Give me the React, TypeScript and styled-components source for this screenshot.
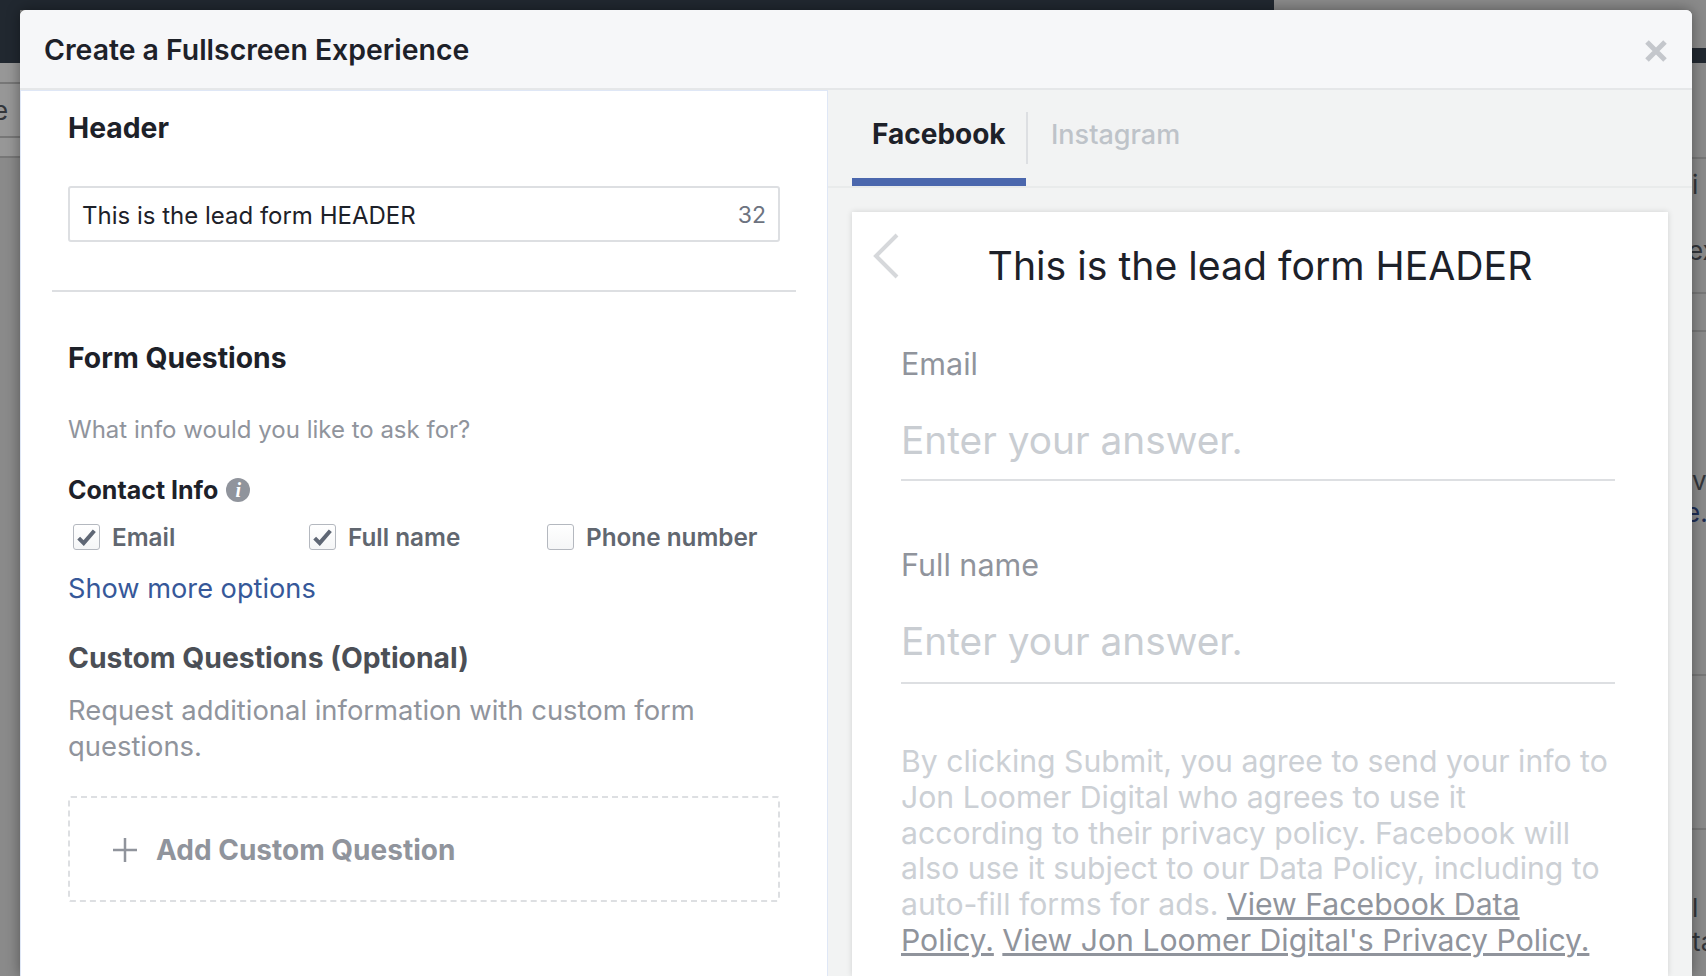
import React from "react";
import styled, { createGlobalStyle } from "styled-components";

const GlobalStyle = createGlobalStyle`
  html, body {
    margin: 0;
    padding: 0;
    height: 100%;
    overflow: hidden;
    background: #8a8a8a;
    font-family: Inter, "Liberation Sans", sans-serif;
  }
`;

const Page = styled.div`
  position: relative;
  width: 1706px;
  height: 976px;
  display: flex;
  overflow: hidden;
  background: #8a8a8a;
`;

const SideStrip = styled.div<{ width: number }>`
  width: ${(p) => p.width}px;
  flex: none;
  display: flex;
  flex-direction: column;
  overflow: hidden;
`;

const MiddleStrip = styled.div`
  flex: 1;
  display: flex;
  height: 10px;
`;

const DarkPart = styled.div`
  width: 1254px;
  background: #212830;
`;

const StripRow = styled.div<{ height: number; dark?: boolean; lined?: boolean; light?: boolean }>`
  height: ${(p) => p.height}px;
  flex: none;
  box-sizing: border-box;
  display: flex;
  align-items: center;
  background: ${(p) => (p.dark ? "#212830" : p.light ? "#979797" : "transparent")};
  border-bottom: ${(p) => (p.lined ? "2px solid #777" : "none")};
  color: #33363b;
  font-size: 26px;
  white-space: nowrap;
`;

const StripText = styled.span<{ offset: number; link?: boolean }>`
  margin-left: ${(p) => p.offset}px;
  color: ${(p) => (p.link ? "#1e2e55" : "inherit")};
`;

const Modal = styled.div`
  position: absolute;
  left: 20px;
  top: 10px;
  width: 1672px;
  height: 966px;
  display: flex;
  flex-direction: column;
  border-radius: 6px 6px 0 0;
  background: #f2f3f3;
  box-shadow: 0 0 14px rgba(0, 0, 0, 0.4);
  overflow: hidden;
`;

const ModalHeader = styled.div`
  height: 80px;
  flex: none;
  box-sizing: border-box;
  display: flex;
  align-items: center;
  justify-content: space-between;
  padding: 0 25px 0 24px;
  background: #f6f7f9;
  border-bottom: 2px solid #e5e7e9;
`;

const ModalTitle = styled.div`
  font-size: 28.4px;
  font-weight: 600;
  color: #1d2129;
  padding-top: 1px;
`;

const CloseIcon = styled.svg`
  width: 22px;
  height: 22px;
  display: block;
  margin-top: 4px;
`;

const ModalBody = styled.div`
  flex: 1;
  display: flex;
  min-height: 0;
`;

const LeftPanel = styled.div`
  width: 808px;
  flex: none;
  box-sizing: border-box;
  background: #fff;
  border: 1px solid #dfe7f6;
  border-bottom: none;
  padding: 0 31px;
`;

const Section = styled.div`
  padding: 0 16px;
`;

const Heading = styled.div<{ muted?: boolean; top: number }>`
  margin-top: ${(p) => p.top}px;
  font-size: 28.3px;
  line-height: 36px;
  font-weight: 700;
  color: ${(p) => (p.muted ? "#4b4f56" : "#1d2129")};
`;

const InputBox = styled.div`
  margin-top: 40px;
  height: 56px;
  box-sizing: border-box;
  display: flex;
  align-items: center;
  justify-content: space-between;
  padding: 2px 12px 0;
  border: 2px solid #dddfe2;
  border-radius: 3px;
  font-size: 24px;
  color: #1d2129;
`;

const Counter = styled.span`
  color: #6d7380;
  font-size: 23px;
`;

const Divider = styled.div`
  margin-top: 48px;
  height: 2px;
  background: #dddfe2;
`;

const Hint = styled.div`
  margin-top: 37px;
  font-size: 24px;
  line-height: 34px;
  color: #90949c;
`;

const SubHeading = styled.div`
  margin-top: 26px;
  display: flex;
  align-items: center;
  gap: 8px;
  font-size: 25px;
  line-height: 34px;
  font-weight: 700;
  color: #1d2129;
`;

const InfoIcon = styled.span`
  width: 24px;
  height: 24px;
  border-radius: 50%;
  background: #90949c;
  color: #fff;
  display: flex;
  align-items: center;
  justify-content: center;
  font: italic 700 20px "Liberation Serif", serif;
`;

const OptionRow = styled.div`
  margin-top: 13px;
  height: 34px;
  display: grid;
  grid-template-columns: 236px 238px 1fr;
  padding-left: 5px;
`;

const Option = styled.label`
  display: flex;
  align-items: center;
  gap: 12px;
  font-size: 24.3px;
  font-weight: 600;
  color: #616770;
  white-space: nowrap;
`;

const CheckBox = styled.span`
  width: 27px;
  height: 26px;
  box-sizing: border-box;
  flex: none;
  display: flex;
  align-items: center;
  justify-content: center;
  border: 1px solid #b4b8bf;
  border-radius: 3px;
  background: linear-gradient(#ffffff, #f5f6f7);
`;

const LinkText = styled.div`
  margin-top: 17px;
  font-size: 27.2px;
  line-height: 36px;
  color: #365899;
`;

const BodyText = styled.div`
  margin-top: 16px;
  font-size: 27.4px;
  line-height: 36px;
  color: #90949c;
`;

const AddBox = styled.div`
  margin-top: 32px;
  height: 106px;
  box-sizing: border-box;
  display: flex;
  align-items: center;
  gap: 19px;
  padding: 2px 0 0 43px;
  border: 2px dashed #dddfe2;
  border-radius: 3px;
  font-size: 28px;
  font-weight: 700;
  color: #90949c;
`;

const RightPanel = styled.div`
  flex: 1;
  min-width: 0;
  display: flex;
  flex-direction: column;
`;

const TabBar = styled.div`
  height: 98px;
  flex: none;
  box-sizing: border-box;
  display: flex;
  padding-left: 24px;
  border-bottom: 2px solid #e9ebeb;
`;

const FacebookTab = styled.div`
  width: 174px;
  height: 96px;
  box-sizing: border-box;
  display: flex;
  align-items: center;
  padding-left: 20px;
  font-size: 28px;
  font-weight: 700;
  color: #1d2129;
  border-bottom: 8px solid #4b67ad;
`;

const InstagramTab = styled.div`
  height: 96px;
  box-sizing: border-box;
  display: flex;
  align-items: center;
  padding: 0 0 8px 23px;
  font-size: 27px;
  font-weight: 500;
  color: #bec3c9;
`;

const TabSeparator = styled.div`
  width: 2px;
  height: 52px;
  margin-top: 22px;
  background: #dddfe2;
`;

const PreviewCard = styled.div`
  margin: 24px 0 0 24px;
  width: 816px;
  flex: 1;
  box-sizing: border-box;
  background: #fff;
  box-shadow: 0 0 6px rgba(0, 0, 0, 0.14);
  padding: 0 53px 0 49px;
`;

const CardHeader = styled.div`
  position: relative;
  height: 106px;
  display: flex;
  align-items: center;
  justify-content: center;
  padding-left: 4px;
  font-size: 39.2px;
  color: #1d2129;
`;

const BackIcon = styled.svg`
  position: absolute;
  left: -31px;
  top: 20px;
  width: 32px;
  height: 48px;
`;

const FieldLabel = styled.div<{ top: number }>`
  margin-top: ${(p) => p.top}px;
  font-size: 30.5px;
  line-height: 40px;
  color: #90949c;
`;

const Placeholder = styled.div<{ height: number }>`
  margin-top: 26px;
  height: ${(p) => p.height}px;
  box-sizing: border-box;
  border-bottom: 2px solid #dddfe2;
  font-size: 38.8px;
  line-height: 60px;
  color: #c9cdd2;
`;

const Legal = styled.div`
  margin-top: 60px;
  font-size: 30.2px;
  line-height: 35.8px;
  color: #ccd0d5;
`;

const LegalLink = styled.span`
  color: #90949c;
  text-decoration: underline;
`;

const Check = () => (
  <svg width="19" height="17" viewBox="0 0 17 15">
    <path d="M1.5 8 L6 12.5 L15.5 1.5" stroke="#5f6775" strokeWidth="3.6" fill="none" />
  </svg>
);

export default function App() {
  return (
    <>
      <GlobalStyle />
      <Page>
        <SideStrip width={20}>
          <StripRow height={63} dark />
          <StripRow height={21} lined light />
          <StripRow height={54} lined light>
            <StripText offset={-7}>e</StripText>
          </StripRow>
          <StripRow height={20} lined light />
        </SideStrip>
        <MiddleStrip>
          <DarkPart />
        </MiddleStrip>
        <SideStrip width={14}>
          <StripRow height={48} />
          <StripRow height={15} dark />
          <StripRow height={96} lined />
          <StripRow height={50}>i</StripRow>
          <StripRow height={85} lined>
            <StripText offset={-4}>ex</StripText>
          </StripRow>
          <StripRow height={38} lined />
          <StripRow height={132} />
          <StripRow height={32}>v</StripRow>
          <StripRow height={32}>
            <StripText offset={-7} link>
              e.
            </StripText>
          </StripRow>
          <StripRow height={148} lined />
          <StripRow height={154} lined />
          <StripRow height={60} />
          <StripRow height={34}>l</StripRow>
          <StripRow height={34}>ta</StripRow>
        </SideStrip>

        <Modal>
          <ModalHeader>
            <ModalTitle>Create a Fullscreen Experience</ModalTitle>
            <CloseIcon viewBox="0 0 22 22">
              <path d="M2 2 L20 20 M20 2 L2 20" stroke="#c4c7cc" strokeWidth="5" fill="none" />
            </CloseIcon>
          </ModalHeader>
          <ModalBody>
            <LeftPanel>
              <Section>
                <Heading top={19}>Header</Heading>
                <InputBox>
                  This is the lead form HEADER
                  <Counter>32</Counter>
                </InputBox>
              </Section>
              <Divider />
              <Section>
                <Heading top={48}>Form Questions</Heading>
                <Hint>What info would you like to ask for?</Hint>
                <SubHeading>
                  Contact Info
                  <InfoIcon>i</InfoIcon>
                </SubHeading>
                <OptionRow>
                  <Option>
                    <CheckBox>
                      <Check />
                    </CheckBox>
                    Email
                  </Option>
                  <Option>
                    <CheckBox>
                      <Check />
                    </CheckBox>
                    Full name
                  </Option>
                  <Option>
                    <CheckBox />
                    Phone number
                  </Option>
                </OptionRow>
                <LinkText>Show more options</LinkText>
                <Heading muted top={33}>
                  Custom Questions (Optional)
                </Heading>
                <BodyText>
                  Request additional information with custom form questions.
                </BodyText>
                <AddBox>
                  <svg width="24" height="24" viewBox="0 0 24 24">
                    <path d="M12 0 V24 M0 12 H24" stroke="#90949c" strokeWidth="2.5" fill="none" />
                  </svg>
                  Add Custom Question
                </AddBox>
              </Section>
            </LeftPanel>
            <RightPanel>
              <TabBar>
                <FacebookTab>Facebook</FacebookTab>
                <TabSeparator />
                <InstagramTab>Instagram</InstagramTab>
              </TabBar>
              <PreviewCard>
                <CardHeader>
                  <BackIcon viewBox="0 0 32 48">
                    <path d="M27 3 L6 24 L27 45" stroke="#d6d8db" strokeWidth="4" fill="none" />
                  </BackIcon>
                  This is the lead form HEADER
                </CardHeader>
                <FieldLabel top={26}>Email</FieldLabel>
                <Placeholder height={71}>Enter your answer.</Placeholder>
                <FieldLabel top={64}>Full name</FieldLabel>
                <Placeholder height={73}>Enter your answer.</Placeholder>
                <Legal>
                  By clicking Submit, you agree to send your info to Jon Loomer Digital who agrees to use it according to
                  their privacy policy. Facebook will also use it subject to our Data Policy, including to auto-fill forms
                  for ads. <LegalLink>View Facebook Data Policy.</LegalLink>{" "}
                  <LegalLink>View Jon Loomer Digital's Privacy Policy.</LegalLink>
                </Legal>
              </PreviewCard>
            </RightPanel>
          </ModalBody>
        </Modal>
      </Page>
    </>
  );
}
